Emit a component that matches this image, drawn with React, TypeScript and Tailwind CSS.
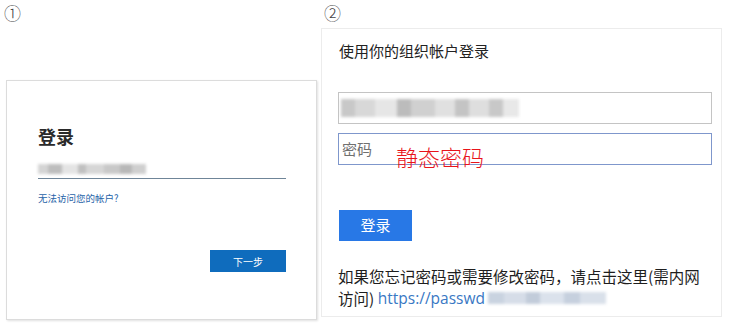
import React from "react";

const cjk = { fontFamily: '"Noto Sans CJK SC", "Noto Sans", sans-serif' };

function Blur({ blocks, h }: { blocks: [number, string][]; h: number }) {
  return (
    <div className="flex blur-[1.5px]" style={{ height: h }}>
      {blocks.map(([w, c], i) => (
        <div key={i} style={{ width: w, background: c }} className="h-full" />
      ))}
    </div>
  );
}

export default function App() {
  return (
    <div className="w-[729px] h-[327px] bg-white flex overflow-hidden text-[#222]" style={cjk}>
      {/* Left column */}
      <div className="w-[321px] flex flex-col pl-[4px]">
        <div className="h-[24px] pt-[2px] text-[17px] leading-[22px] text-[#444] font-light">①</div>
        <div className="mt-[56px] ml-[2px] w-[311px] h-[240px] border border-[#dcdcdc] shadow-[1px_1px_2px_rgba(0,0,0,0.12)] flex flex-col pl-[31px] pr-[30px]">
          <div className="mt-[44px] text-[18px] leading-[22px] font-bold text-[#2a2a2a]">登录</div>
          <div className="mt-[15px] h-[14px] flex items-center">
            <Blur
              h={10}
              blocks={[
                [10, "#d4d4d4"],
                [14, "#bdbdbd"],
                [16, "#e4e4e4"],
                [8, "#c0c0c0"],
                [18, "#d6d6d6"],
                [16, "#c8c8c8"],
                [12, "#b8b8b8"],
                [14, "#cfcfcf"],
              ]}
            />
          </div>
          <div className="mt-[2px] h-px bg-[#6f8598]" />
          <div className="mt-[13px] text-[9.5px] leading-[12px] text-[#1f63a8]">无法访问您的帐户?</div>
          <div className="mt-[46px] flex justify-end">
            <div className="w-[76px] h-[22px] bg-[#0f6cbd] text-white text-[10px] flex items-center justify-center">下一步</div>
          </div>
        </div>
      </div>

      {/* Right column */}
      <div className="flex flex-col">
        <div className="h-[28px] pl-[3px] pt-[2px] text-[17px] leading-[22px] text-[#444] font-light">②</div>
        <div className="w-[401px] h-[289px] border border-[#ececec] flex flex-col pl-[16px] pr-[9px]">
          <div className="mt-[12px] pl-[1px] text-[15px] leading-[20px] text-[#222]">使用你的组织帐户登录</div>
          <div className="mt-[31px] h-[32px] border border-[#c4c4c4] flex items-center pl-[2px]">
            <Blur
              h={18}
              blocks={[
                [14, "#c8c8c8"],
                [20, "#d8d8d8"],
                [22, "#e6e6e6"],
                [14, "#bcbcbc"],
                [24, "#d0d0d0"],
                [20, "#e0e0e0"],
                [14, "#c4c4c4"],
                [20, "#dedede"],
                [14, "#c8c8c8"],
                [16, "#e8e8e8"],
              ]}
            />
          </div>
          <div className="relative mt-[9px] h-[32px] border-[1.5px] border-[#7f97cc] flex items-center pl-[3px]">
            <span className="text-[15px] text-[#707070] leading-[20px]">密码</span>
            <span className="absolute left-[57px] top-[8px] text-[22px] leading-[28px] text-[#e8141b] font-light">静态密码</span>
          </div>
          <div className="mt-[45px] ml-[1px] w-[73px] h-[31px] bg-[#2878e6] text-white text-[15px] flex items-center justify-center">登录</div>
          <div className="mt-[24px] text-[15.5px] leading-[22px] text-[#1e1e1e]">
            <div>如果您忘记密码或需要修改密码，请点击这里(需内网</div>
            <div className="flex items-center">
              <span>访问)&nbsp;</span>
              <span className="text-[#3978c4]" style={{ fontFamily: '"Open Sans", "Noto Sans", sans-serif' }}>https://passwd</span>
              <div className="ml-[3px]">
                <Blur
                  h={12}
                  blocks={[
                    [16, "#c9d3e0"],
                    [22, "#d6dde8"],
                    [14, "#c2ccda"],
                    [24, "#dbe2ec"],
                    [16, "#c6d0de"],
                    [26, "#d9e0ea"],
                  ]}
                />
              </div>
            </div>
          </div>
        </div>
      </div>
    </div>
  );
}
